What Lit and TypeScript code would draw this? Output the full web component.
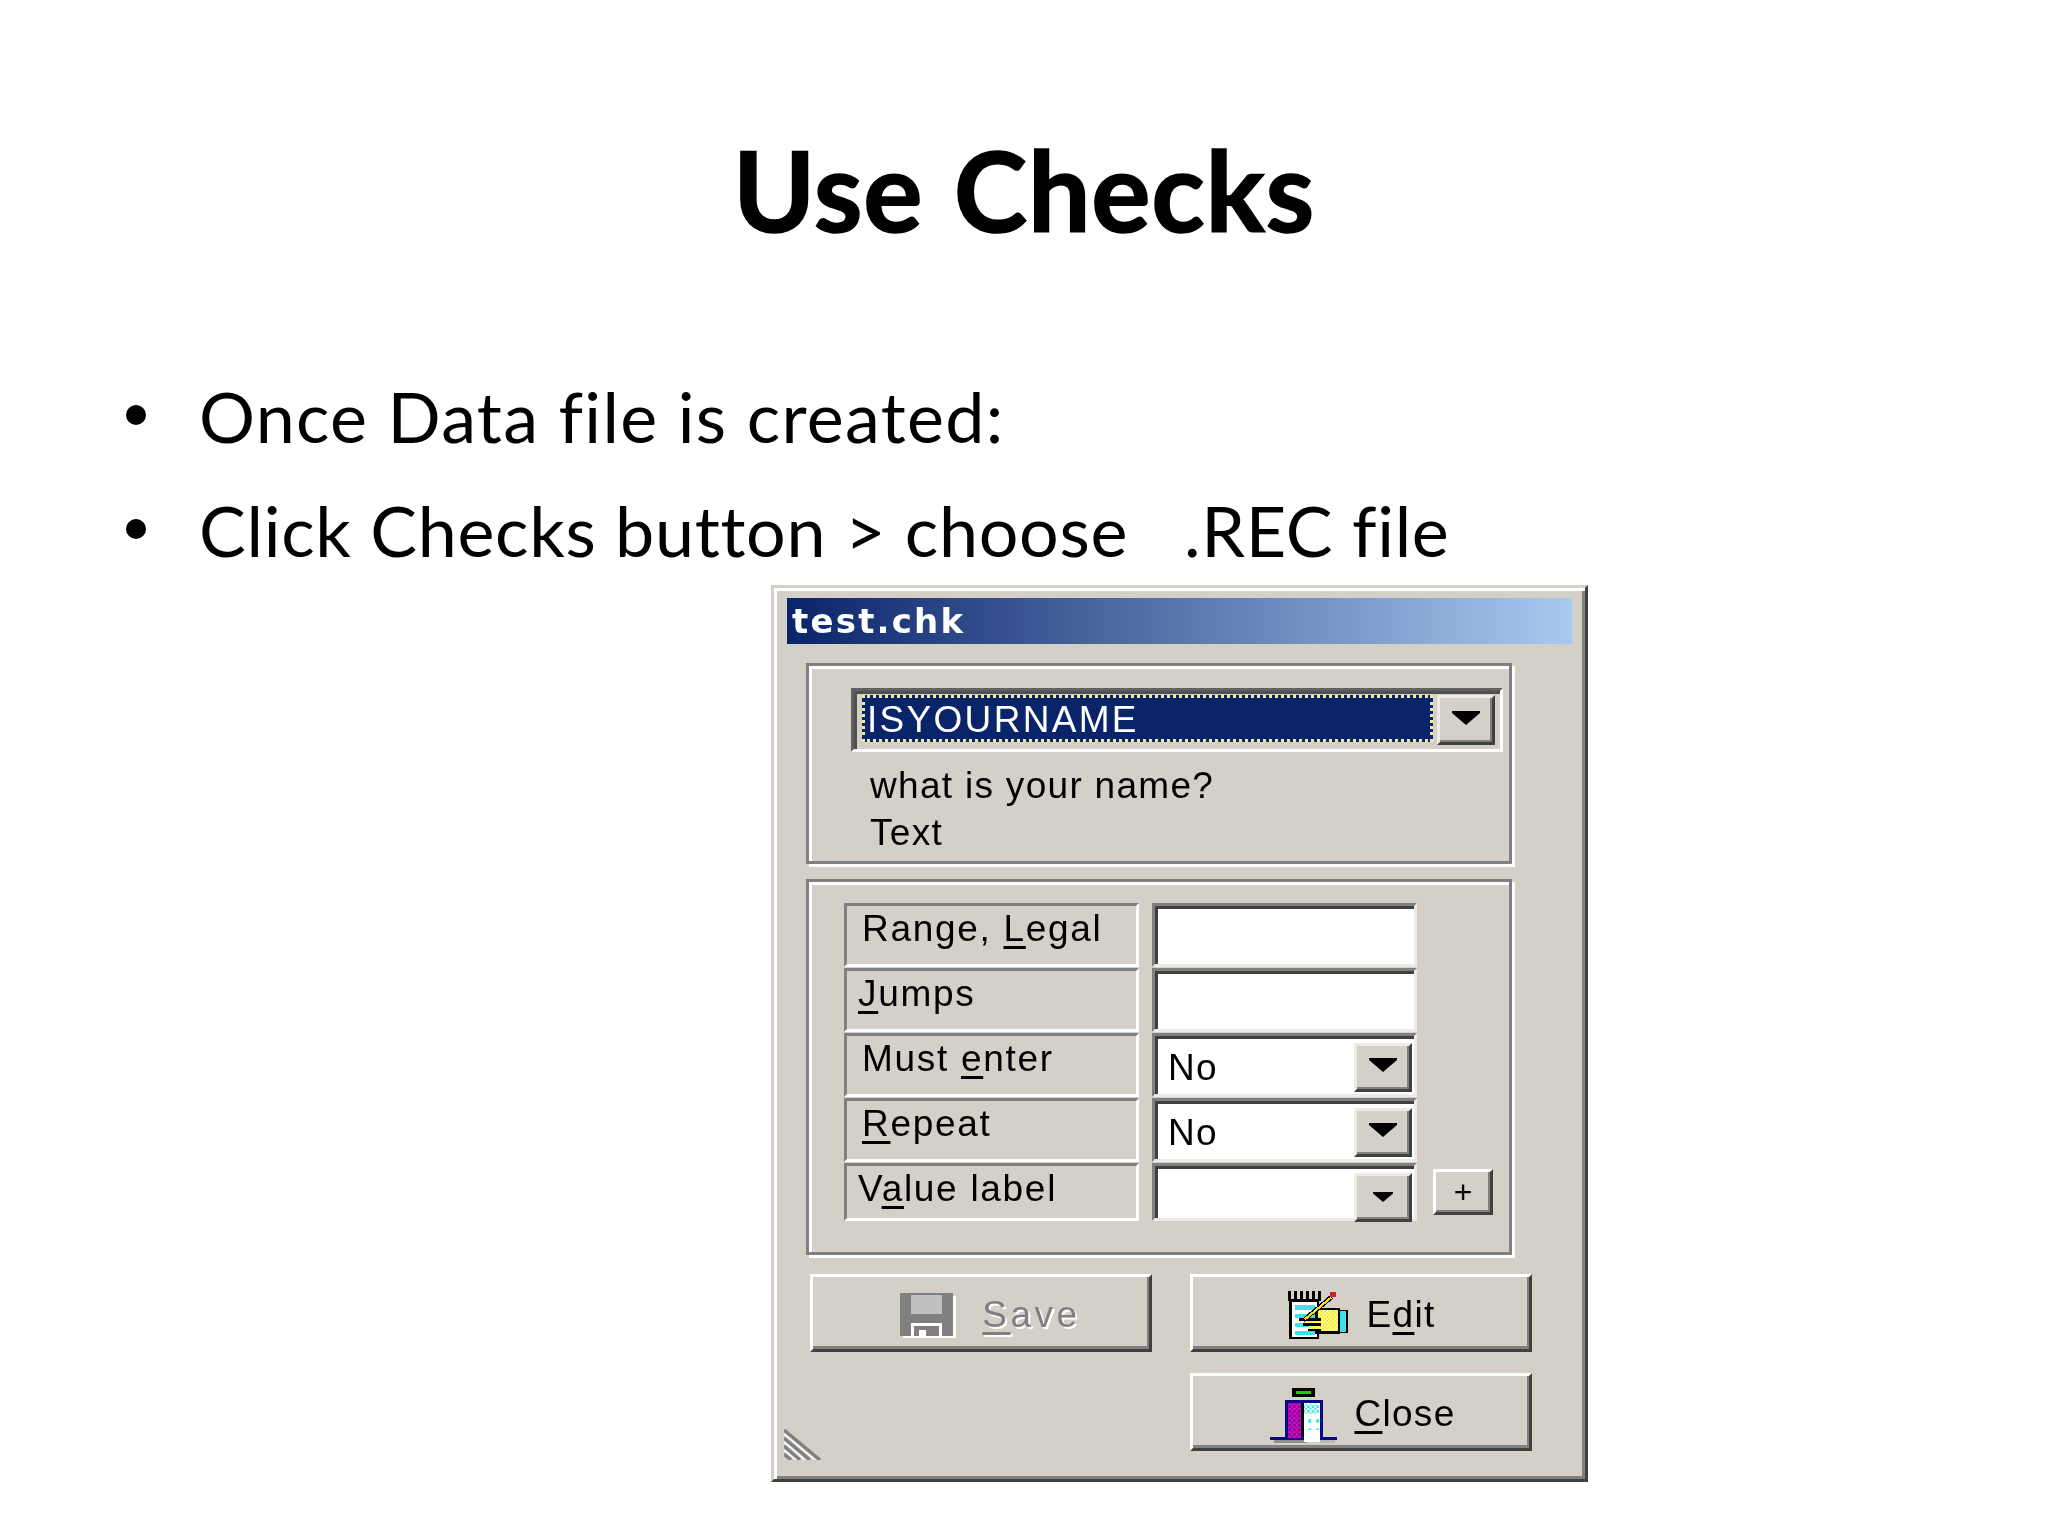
import { LitElement, html, css, svg } from "lit";
import { customElement } from "lit/decorators.js";

const arrow = (small = false) => html`<svg class=${small ? "arrow small" : "arrow"} viewBox="0 0 28 14"><path d="M0 0H28V2L14 14L0 2Z" fill="#000"/></svg>`;

const saveIcon = html`<svg class="icon save" viewBox="60 38 175 142" shape-rendering="crispEdges">
  <rect x="72" y="50" width="160" height="128" fill="#fff"/>
  <rect x="62" y="40" width="160" height="130" fill="#808080"/>
  <rect x="95" y="48" width="95" height="57" fill="#c0c0c0"/>
  <rect x="95" y="132" width="95" height="46" fill="#fff"/>
  <rect x="106" y="142" width="74" height="28" fill="#808080"/>
  <rect x="120" y="153" width="20" height="25" fill="#fff"/>
</svg>`;

const editIcon = html`<svg class="icon edit" viewBox="55 30 190 150" shape-rendering="crispEdges">
  <defs><pattern id="yd" width="12" height="12" patternUnits="userSpaceOnUse"><rect width="12" height="12" fill="#ffee20"/><rect width="6" height="6" fill="#f8f8b0"/><rect x="6" y="6" width="6" height="6" fill="#f8f8b0"/></pattern></defs>
  <rect x="60" y="58" width="92" height="120" fill="#000"/>
  <rect x="70" y="65" width="75" height="105" fill="#fff"/>
  ${[0, 1, 2, 3, 4, 5].map((i) => svg`<rect x=${58 + i * 18} y="32" width="9" height="30" fill="#000"/>`)}
  ${[76, 102, 128, 153].map((y) => svg`<rect x="78" y=${y} width="60" height="13" fill="#40e0e8"/>`)}
  <rect x="214" y="90" width="26" height="70" fill="#000"/>
  <rect x="214" y="92" width="20" height="64" fill="#40e0e8"/>
  <rect x="140" y="84" width="76" height="78" fill="#000"/>
  <rect x="148" y="90" width="62" height="64" fill="url(#yd)"/>
  <rect x="92" y="114" width="66" height="8" fill="#000"/>
  <rect x="104" y="130" width="54" height="8" fill="#000"/>
  <rect x="118" y="146" width="40" height="8" fill="#000"/>
  <rect x="108" y="122" width="44" height="8" fill="#ffff40"/>
  <rect x="120" y="138" width="32" height="8" fill="#ffff40"/>
  <path d="M96 120L184 46L194 56L108 126Z" fill="#000"/>
  <path d="M106 116L186 50L190 55L112 120Z" fill="#f8e020"/>
  <rect x="184" y="36" width="20" height="16" fill="#d02020"/>
</svg>`;

const closeIcon = html`<svg class="icon close" viewBox="25 15 215 175" shape-rendering="crispEdges">
  <defs>
    <pattern id="md" width="14" height="14" patternUnits="userSpaceOnUse"><rect width="14" height="14" fill="#f000c8"/><rect width="7" height="7" fill="#701098"/><rect x="7" y="7" width="7" height="7" fill="#701098"/></pattern>
    <pattern id="cd" width="14" height="14" patternUnits="userSpaceOnUse"><rect width="14" height="14" fill="#fff"/><rect width="7" height="7" fill="#40e8f0"/><rect x="7" y="7" width="7" height="7" fill="#40e8f0"/></pattern>
    <pattern id="cs" width="24" height="28" patternUnits="userSpaceOnUse"><rect width="24" height="28" fill="#fff"/><rect width="10" height="10" fill="#40e8f0"/></pattern>
  </defs>
  <rect x="40" y="172" width="100" height="13" fill="#909090"/>
  <rect x="105" y="162" width="36" height="23" fill="#909090"/>
  <rect x="180" y="176" width="45" height="8" fill="#b8b8b8"/>
  <rect x="95" y="18" width="70" height="28" fill="#000"/>
  <rect x="108" y="27" width="44" height="10" fill="#10d010"/>
  <rect x="72" y="55" width="116" height="120" fill="#0a0a80"/>
  <rect x="28" y="167" width="50" height="9" fill="#0a0a80"/>
  <rect x="182" y="167" width="50" height="9" fill="#0a0a80"/>
  <rect x="82" y="64" width="40" height="104" fill="url(#md)"/>
  <rect x="122" y="64" width="8" height="98" fill="#000"/>
  <rect x="130" y="64" width="48" height="116" fill="#fff"/>
  <rect x="130" y="66" width="46" height="30" fill="url(#cd)"/>
  <rect x="142" y="100" width="36" height="44" fill="url(#cs)"/>
</svg>`;

const grip = html`<svg class="grip" viewBox="0 0 38 32">
  <path d="M0 2L36 32M0 10L26 32M0 18L16 32M0 26L7 32" stroke="#808080" stroke-width="3.5" fill="none"/>
  <path d="M0 6L31 32M0 14L21 32M0 22L12 32" stroke="#f4f4f4" stroke-width="2" fill="none"/>
</svg>`;

const rows = [
  { t: html`Range, <u>L</u>egal`, cls: "", kind: "input" },
  { t: html`<u>J</u>umps`, cls: "tight", kind: "input" },
  { t: html`Must <u>e</u>nter`, cls: "", kind: "No" },
  { t: html`<u>R</u>epeat`, cls: "", kind: "No" },
  { t: html`V<u>a</u>lue label`, cls: "tight", kind: "" },
];

@customElement("app-root")
export class AppRoot extends LitElement {
  static styles = css`
    :host { display: block; width: 2048px; height: 1536px; background: #fff; overflow: hidden; color: #000; }
    .slide { height: 1536px; padding-top: 129px; box-sizing: border-box; font-family: Lato, "Open Sans", sans-serif; font-variant-ligatures: none; }
    h1 { margin: 0; font-size: 111px; line-height: 120px; font-weight: 700; text-align: center; letter-spacing: 0.7px; word-spacing: 3px; -webkit-text-stroke: 1.5px #000; }
    ul { list-style: none; margin: 127px 0 0; padding: 0 0 0 126px; display: flex; flex-direction: column; gap: 34px; }
    li { display: flex; font-size: 70px; line-height: 80px; white-space: pre; letter-spacing: 0.7px; }
    li.wide { letter-spacing: 1.3px; }
    .dot { width: 20px; height: 20px; border-radius: 50%; background: #000; margin: 29px 53px 0 0; flex: none; }

    .win { margin: 15px 0 0 771px; width: 817px; height: 897px; box-sizing: border-box; background: #d4d0c8; position: relative;
      border: 3px solid; border-color: #d4d0c8 #404040 #404040 #d4d0c8;
      box-shadow: inset 3px 3px 0 #fff, inset -3px -3px 0 #808080;
      padding: 10px 13px 0 13px; filter: blur(0.5px);
      font: 37px/40px "Liberation Sans", Arial, sans-serif; letter-spacing: 1.3px; }
    .title { height: 46px; background: linear-gradient(90deg, #0a246a, #a6caf0); color: #fff; padding-left: 5px;
      font: 700 34px/47px "DejaVu Sans", sans-serif; letter-spacing: 2.2px; }
    .group { width: 706px; margin-left: 19px; box-sizing: border-box; border: 3px solid #808080;
      box-shadow: inset 3px 3px 0 #fff, 3px 3px 0 #fff; }
    .g1 { height: 201px; margin-top: 19px; padding: 22px 0 0 42px; }
    .g2 { height: 376px; margin-top: 15px; padding: 21px 0 0 35px; letter-spacing: 1.7px; }

    .main-combo { width: 652px; height: 64px; box-sizing: border-box; display: flex; background: #d4d0c8;
      border: 3px solid; border-color: #606060 #fff #fff #606060; box-shadow: inset 3px 3px 0 #505050; padding: 4px 4px 0 8px; gap: 4px; }
    .main-combo .mini { margin: 0; height: 50px; }
    .sel { width: 571px; height: 47px; box-sizing: border-box; background: #0a246a; color: #fff; border: 3px dotted #f0e8a0; line-height: 43px; letter-spacing: 2.3px; white-space: nowrap; }
    .sel-text { margin-left: 2px; }
    .desc { margin: 10px 0 0 19px; line-height: 47px; }

    .form { display: grid; grid-template-columns: 295px 265px auto; grid-template-rows: repeat(4, 64px) 58px; column-gap: 13px; row-gap: 1px; justify-content: start; }
    .label { box-sizing: border-box; border: 3px solid; border-color: #808080 #fff #fff #808080; padding: 3px 0 0 15px; white-space: nowrap; grid-column: 1; }
    .label.tight { padding-left: 11px; }
    u { text-decoration-thickness: 3px; text-underline-offset: 5px; }
    .field { box-sizing: border-box; background: #fff; border: 3px solid; border-color: #808080 #ecebe8 #ecebe8 #808080; box-shadow: inset 3px 3px 0 #404040; display: flex; justify-content: space-between; grid-column: 2; }
    .field-text { padding: 12px 0 0 13px; letter-spacing: 1.3px; }
    .mini { width: 58px; height: 49px; box-sizing: border-box; margin: 7px 2px 0 0; background: #d4d0c8; display: flex; align-items: center; justify-content: center;
      border: 3px solid; border-color: #ecebe8 #404040 #404040 #ecebe8; box-shadow: inset -2px -2px 0 #808080; }
    .arrow { width: 28px; height: 14px; margin-bottom: 5px; }
    .arrow.small { width: 20px; height: 10px; margin: 0 0 2px; }
    .plus { grid-column: 3; width: 60px; height: 46px; box-sizing: border-box; margin-left: 3px; align-self: center; background: #d4d0c8; display: flex; align-items: center; justify-content: center;
      border: 3px solid; border-color: #fff #404040 #404040 #fff; box-shadow: inset -2px -2px 0 #808080; font: 400 32px/34px "Liberation Sans", sans-serif; letter-spacing: 0; }

    .buttons { display: grid; grid-template-columns: 342px 342px; grid-template-rows: 78px 78px; column-gap: 38px; row-gap: 21px; margin: 19px 0 0 23px; }
    .btn { box-sizing: border-box; background: #d4d0c8; display: flex; align-items: center; justify-content: center;
      border: 3px solid; border-color: #fff #404040 #404040 #fff; box-shadow: inset -2px -3px 0 #808080; padding-top: 4px; gap: 17px; }
    .btn.saving { gap: 25px; padding-left: 18px; color: #808080; letter-spacing: 3.5px; }
    .btn.saving span { text-shadow: 2px 2px 0 #fff; }
    .btn.closing { grid-column: 2; gap: 14px; padding-left: 3px; }
    .icon.save { width: 58px; height: 47px; }
    .icon.edit { width: 63px; height: 50px; }
    .icon.close { width: 71px; height: 58px; margin-bottom: -3px; }
    .grip { position: absolute; left: 10px; bottom: 19px; width: 38px; height: 32px; }
  `;

  render() {
    return html`<div class="slide">
      <h1>Use Checks</h1>
      <ul>
        <li class="wide"><span class="dot"></span><span>Once Data file is created:</span></li>
        <li><span class="dot"></span><span>Click Checks button &gt; choose   .REC file</span></li>
      </ul>
      <div class="win">
        <div class="title">test.chk</div>
        <div class="group g1">
          <div class="main-combo">
            <div class="sel"><span class="sel-text">ISYOURNAME</span></div>
            <div class="mini">${arrow()}</div>
          </div>
          <div class="desc">what is your name?<br />Text</div>
        </div>
        <div class="group g2">
          <div class="form">
            ${rows.map((r) => html`
              <div class="label ${r.cls}">${r.t}</div>
              ${r.kind === "input"
                ? html`<div class="field"></div>`
                : html`<div class="field"><span class="field-text">${r.kind}</span><div class="mini">${arrow(r.kind === "")}</div></div>`}
            `)}
            <div class="plus">+</div>
          </div>
        </div>
        <div class="buttons">
          <div class="btn saving">${saveIcon}<span><u>S</u>ave</span></div>
          <div class="btn">${editIcon}<span>E<u>d</u>it</span></div>
          <div class="btn closing">${closeIcon}<span><u>C</u>lose</span></div>
        </div>
        ${grip}
      </div>
    </div>`;
  }
}
